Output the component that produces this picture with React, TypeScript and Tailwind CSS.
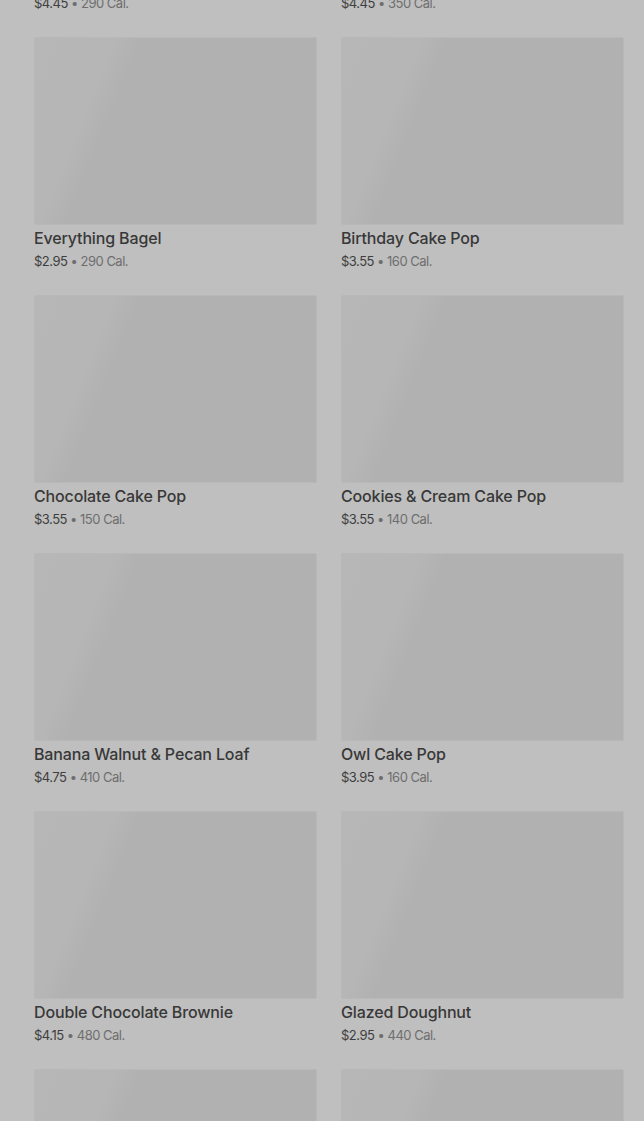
import React from 'react'

interface Item {
	name: string
	price: string
	cal: string
}

const items: Item[] = [
	{ name: 'Butter Croissant', price: '$4.45', cal: '290' },
	{ name: 'Chocolate Croissant', price: '$4.45', cal: '350' },
	{ name: 'Everything Bagel', price: '$2.95', cal: '290' },
	{ name: 'Birthday Cake Pop', price: '$3.55', cal: '160' },
	{ name: 'Chocolate Cake Pop', price: '$3.55', cal: '150' },
	{ name: 'Cookies & Cream Cake Pop', price: '$3.55', cal: '140' },
	{ name: 'Banana Walnut & Pecan Loaf', price: '$4.75', cal: '410' },
	{ name: 'Owl Cake Pop', price: '$3.95', cal: '160' },
	{ name: 'Double Chocolate Brownie', price: '$4.15', cal: '480' },
	{ name: 'Glazed Doughnut', price: '$2.95', cal: '440' },
	{ name: 'Plain Bagel', price: '$2.75', cal: '280' },
	{ name: 'Lemon Loaf', price: '$3.95', cal: '470' },
]

const App: React.FC = () => {
	return (
		<div className="w-[644px] h-[1121px] overflow-hidden bg-[#bfbfbf] font-['Inter',sans-serif]">
			{/* list is scrolled: first row shows only its price line */}
			<div className="grid grid-cols-2 gap-x-6 gap-y-6 pl-[34px] pr-[20px] mt-[-221px]">
				{items.map(item => (
					<div key={item.name} className="flex flex-col">
						<div className="h-[188px] rounded-[2px] border border-[#b8b8b8] bg-[linear-gradient(112deg,#b7b7b7_0%,#b6b6b6_22%,#b1b1b1_30%,#b1b1b1_100%)]" />
						<p className="mt-[3px] text-[16px] leading-[20px] font-medium tracking-[-0.15px] text-[#383838]">{item.name}</p>
						<p className="mt-[3px] text-[13px] leading-[20px] tracking-[-0.5px] text-[#6e6e6e]">
							<span className="text-[#3e3e3e]">{item.price}</span> • {item.cal} Cal.
						</p>
					</div>
				))}
			</div>
		</div>
	)
}

export default App
